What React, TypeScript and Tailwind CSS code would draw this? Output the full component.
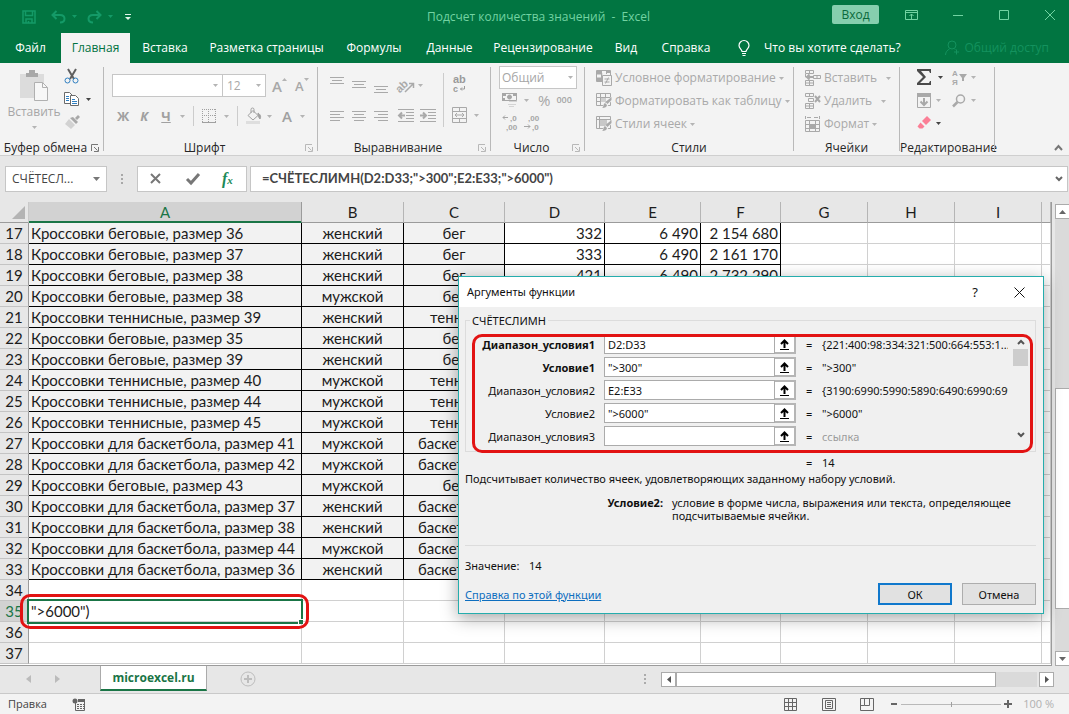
import type { ReactNode } from "react";
import { clsx } from "clsx";

const tabs = [
  { name: "Файл", width: "w-[61px]" },
  { name: "Главная", width: "w-[69px]", active: true },
  { name: "Вставка", width: "w-[70px]" },
  { name: "Разметка страницы", width: "w-[133px]" },
  { name: "Формулы", width: "w-[82px]" },
  { name: "Данные", width: "w-[69px]" },
  { name: "Рецензирование", width: "w-[118px]" },
  { name: "Вид", width: "w-[48px]" },
  { name: "Справка", width: "w-[72px]" },
];

const columns = [
  { name: "A", width: "w-[273px]" },
  { name: "B", width: "w-[102px]" },
  { name: "C", width: "w-[101px]" },
  { name: "D", width: "w-[100px]" },
  { name: "E", width: "w-[96px]" },
  { name: "F", width: "w-[80px]" },
  { name: "G", width: "w-[87px]" },
  { name: "H", width: "w-[87px]" },
  { name: "I", width: "w-[87px]" },
  { name: "", width: "" },
];

const rows: { id: number; cells: string[] }[] = [
  { id: 17, cells: ["Кроссовки беговые, размер 36", "женский", "бег", "332", "6 490", "2 154 680"] },
  { id: 18, cells: ["Кроссовки беговые, размер 37", "женский", "бег", "333", "6 490", "2 161 170"] },
  { id: 19, cells: ["Кроссовки беговые, размер 38", "женский", "бег", "421", "6 490", "2 732 290"] },
  { id: 20, cells: ["Кроссовки беговые, размер 38", "мужской", "бег", "", "", ""] },
  { id: 21, cells: ["Кроссовки теннисные, размер 39", "женский", "теннис", "", "", ""] },
  { id: 22, cells: ["Кроссовки беговые, размер 35", "женский", "бег", "", "", ""] },
  { id: 23, cells: ["Кроссовки беговые, размер 39", "женский", "бег", "", "", ""] },
  { id: 24, cells: ["Кроссовки теннисные, размер 40", "мужской", "теннис", "", "", ""] },
  { id: 25, cells: ["Кроссовки теннисные, размер 44", "мужской", "теннис", "", "", ""] },
  { id: 26, cells: ["Кроссовки теннисные, размер 45", "мужской", "теннис", "", "", ""] },
  { id: 27, cells: ["Кроссовки для баскетбола, размер 41", "мужской", "баскетбол", "", "", ""] },
  { id: 28, cells: ["Кроссовки для баскетбола, размер 42", "мужской", "баскетбол", "", "", ""] },
  { id: 29, cells: ["Кроссовки беговые, размер 43", "мужской", "бег", "", "", ""] },
  { id: 30, cells: ["Кроссовки для баскетбола, размер 37", "женский", "баскетбол", "", "", ""] },
  { id: 31, cells: ["Кроссовки для баскетбола, размер 38", "женский", "баскетбол", "", "", ""] },
  { id: 32, cells: ["Кроссовки для баскетбола, размер 44", "мужской", "баскетбол", "", "", ""] },
  { id: 33, cells: ["Кроссовки для баскетбола, размер 36", "женский", "баскетбол", "", "", ""] },
  { id: 34, cells: [] },
  { id: 35, cells: ['">6000")'] },
  { id: 36, cells: [] },
  { id: 37, cells: [] },
];

const args = [
  { label: "Диапазон_условия1", value: "D2:D33", result: "{221:400:98:334:321:500:664:553:1...", required: true },
  { label: "Условие1", value: '">300"', result: '">300"', required: true },
  { label: "Диапазон_условия2", value: "E2:E33", result: "{3190:6990:5990:5890:6490:6990:6990:5" },
  { label: "Условие2", value: '">6000"', result: '">6000"' },
  { label: "Диапазон_условия3", value: "", result: "ссылка" },
];

type IconProps = { w?: number; h?: number; className?: string; children: ReactNode };

const Icon = ({ w = 16, h = 16, className, children }: IconProps) => (
  <svg
    width={w}
    height={h}
    viewBox={`0 0 ${w} ${h}`}
    fill="none"
    stroke="currentColor"
    className={clsx("shrink-0 overflow-visible font-['Liberation_Sans',sans-serif]", className)}
    aria-hidden="true"
  >
    {children}
  </svg>
);

const Caret = ({ dark }: { dark?: boolean }) => (
  <svg width="5" height="3" viewBox="0 0 5 3" className={clsx("shrink-0", dark ? "text-[#444444]" : "text-[#b4b4b4]")} aria-hidden="true">
    <path d="M0 0h5L2.5 3z" fill="currentColor" />
  </svg>
);

const Tool = ({ label, className, children }: { label: string; className?: string; children: ReactNode }) => (
  <button type="button" aria-label={label} className={clsx("flex shrink-0 items-center", className)}>
    {children}
  </button>
);

const Lines = ({ rows: ys, align }: { rows: number[]; align: "left" | "center" | "right" }) => (
  <Icon w={14} h={16}>
    {ys.map((y, i) => {
      const len = i % 2 ? 10 : 14;
      const x = align === "left" ? 0 : align === "center" ? 2 * (i % 2) : 14 - len;
      return <path key={y} d={`M${x} ${y + 0.5}h${len}`} />;
    })}
  </Icon>
);

const Launcher = ({ dark }: { dark?: boolean }) => (
  <Icon w={8} h={8} className={dark ? "text-[#777777]" : "text-[#b8b8b8]"}>
    <path d="M.5 7V.5H7M3 3l3.500 3.500M7.500 3v4.500H3" />
  </Icon>
);

type GroupProps = { title: string; width: string; launcher?: "dark" | "light"; children: ReactNode };

const Group = ({ title, width, launcher, children }: GroupProps) => (
  <section className={clsx("flex shrink-0", width)}>
    <div className="flex min-w-0 flex-1 flex-col">
      <div className="h-[77px]">{children}</div>
      <div className="flex h-[15px] items-center">
        <h2 className="flex-1 whitespace-nowrap text-center text-xs leading-[15px] text-[#262626]">{title}</h2>
        {launcher && (
          <button type="button" aria-label={title} className="mr-1">
            <Launcher dark={launcher === "dark"} />
          </button>
        )}
      </div>
    </div>
    <div className="my-1 w-px bg-[#b9b9b9]" />
  </section>
);

const TitleBar = () => (
  <header className="flex h-[33px] items-center text-[#72d3a2]">
    <div className="flex flex-1 items-center pl-[22px] text-[#149a67]">
      <Tool label="Сохранить">
        <Icon w={14} h={14}>
          <path d="M1 1h12v12H1zM3.500 1v4.500h7V1M4 13V9h6v4M6.500 13v-2" strokeWidth="1.500" />
        </Icon>
      </Tool>
      <Tool label="Отменить" className="ml-[15px] gap-[6px]">
        <Icon w={15} h={14}>
          <path d="M5.500 1L1.500 5l4 4M1.500 5H9c6 0 6 7.500 0 7.500" strokeWidth="2" />
        </Icon>
        <svg width="5" height="3" viewBox="0 0 5 3" aria-hidden="true"><path d="M0 0h5L2.500 3z" fill="currentColor" /></svg>
      </Tool>
      <Tool label="Вернуть" className="ml-[10px] gap-[6px]">
        <Icon w={15} h={14}>
          <path d="M9.500 1l4 4-4 4M13.500 5H6c-6 0-6 7.500 0 7.500" strokeWidth="2" />
        </Icon>
        <svg width="5" height="3" viewBox="0 0 5 3" aria-hidden="true"><path d="M0 0h5L2.500 3z" fill="currentColor" /></svg>
      </Tool>
      <Tool label="Настройка панели быстрого доступа" className="ml-[12px] text-[#e0f5ea]">
        <Icon w={6} h={6}>
          <path d="M0 .5h6" />
          <path d="M0 3h6L3 6z" fill="currentColor" stroke="none" />
        </Icon>
      </Tool>
    </div>
    <h1 className="whitespace-pre text-xs leading-4">Подсчет количества значений  -  Excel</h1>
    <div className="flex flex-1 items-center justify-end pr-[14px]">
      <button type="button" className="mb-1 h-[19px] w-[47px] rounded-[2px] bg-[#86cfae] text-xs leading-4 text-[#0a6a3c]">
        Вход
      </button>
      <div className="mb-1 flex items-center">
        <Tool label="Параметры ленты" className="ml-[26px]">
          <Icon w={13} h={10}>
            <path d="M.5.5h12v9H.5zM.5 2.500h12M6.500 9V4M4.500 6l2-2 2 2" />
          </Icon>
        </Tool>
        <Tool label="Свернуть" className="ml-[35px]">
          <Icon w={10} h={10}><path d="M0 5.500h10" /></Icon>
        </Tool>
        <Tool label="Развернуть" className="ml-9">
          <Icon w={10} h={10}><path d="M.5.5h9v9h-9z" /></Icon>
        </Tool>
        <Tool label="Закрыть" className="ml-9">
          <Icon w={10} h={10}><path d="M0 0l10 10M10 0L0 10" /></Icon>
        </Tool>
      </div>
    </div>
  </header>
);

const TabBar = () => (
  <nav className="flex h-[30px] items-center text-xs leading-4 text-white">
    {tabs.map((t) => (
      <button
        key={t.name}
        type="button"
        className={clsx(
          "h-full shrink-0 whitespace-nowrap text-center",
          t.width,
          t.active && "bg-[#f3f3f3] text-[#00723f]",
        )}
      >
        {t.name}
      </button>
    ))}
    <button type="button" className="ml-4 flex items-center gap-[14px] whitespace-nowrap">
      <Icon w={12} h={16}>
        <path d="M4 11.500c0-2-3-3-3-6a5 5 0 0 1 10 0c0 3-3 4-3 6zM4 13.500h4M4.500 15.500h3" strokeWidth="1.200" />
      </Icon>
      Что вы хотите сделать?
    </button>
    <button type="button" className="ml-auto mr-5 flex items-center gap-1 whitespace-nowrap text-[#14925e]">
      <Icon w={15} h={16}>
        <circle cx="7" cy="5" r="4" />
        <path d="M.5 15c0-3 2-5 4-6M9.500 9l1 .5M11.500 9.500v5M9 12h5" />
      </Icon>
      Общий доступ
    </button>
  </nav>
);

const ClipboardGroup = () => (
  <Group title="Буфер обмена" width="w-[104px]" launcher="dark">
    <div className="flex">
      <button type="button" className="flex w-16 shrink-0 flex-col items-center pl-1 pt-[7px] text-xs leading-4 text-[#a6a6a6]">
        <Icon w={28} h={32}>
          <path d="M0 4h24v24H0z" fill="#dcdcdc" stroke="none" />
          <path d="M6 3h3V0h6v3h3v4H6z" fill="#a8a8a8" stroke="none" />
          <path d="M14.500 12.500h8l5 5v13h-13z" fill="#f7f7f7" stroke="#b0b0b0" />
          <path d="M22.500 12.500v5h5" stroke="#b0b0b0" />
        </Icon>
        <span className="mt-[2px]">Вставить</span>
        <span className="mt-[6px]"><Caret /></span>
      </button>
      <div className="flex flex-col gap-2 pt-[6px]">
        <Tool label="Вырезать">
          <Icon w={16} h={15}>
            <path d="M4 0l6 10M12 0L6 10" stroke="#5f5f5f" strokeWidth="2" />
            <circle cx="3.500" cy="11.500" r="2.500" stroke="#2f7fc1" />
            <circle cx="11.500" cy="11.500" r="2.500" stroke="#2f7fc1" />
          </Icon>
        </Tool>
        <Tool label="Копировать" className="gap-[6px]">
          <Icon w={16} h={15}>
            <path d="M.5.5h5l3 3v8h-8z" fill="#fff" stroke="#6a6a6a" />
            <path d="M6.500 3.500h5l3 3v7h-8z" fill="#fff" stroke="#6a6a6a" />
            <path d="M2 4.500h3M2 6.500h3M2 8.500h3M8 7.500h3M8 9.500h5M8 11.500h5" stroke="#2f7fc1" />
          </Icon>
          <Caret dark />
        </Tool>
        <Tool label="Формат по образцу">
          <Icon w={16} h={14}>
            <path d="M11 3l3-3 2 2-3 3z" fill="#a8a8a8" stroke="none" />
            <path d="M6 3l3-1 5 5-2 2z" fill="#a8a8a8" stroke="none" />
            <path d="M5 4l6 6-4 4-6-5z" fill="#d2d2d2" stroke="none" />
          </Icon>
        </Tool>
      </div>
    </div>
  </Group>
);

const FontGroup = () => (
  <Group title="Шрифт" width="w-[214px]" launcher="light">
    <div className="flex pl-2 pt-[11px] text-[#a8a8a8]">
      <label className="flex h-[23px] w-[111px] items-center border border-[#c6c6c6] bg-white pr-1">
        <input aria-label="Шрифт" className="min-w-0 flex-1 outline-none" />
        <Caret />
      </label>
      <label className="flex h-[23px] w-[43px] items-center border border-l-0 border-[#c6c6c6] bg-white pr-1">
        <input aria-label="Размер шрифта" defaultValue="12" className="w-0 min-w-0 flex-1 pl-1 text-xs outline-none" />
        <Caret />
      </label>
      <Tool label="Увеличить размер шрифта" className="ml-[6px] h-[23px] text-[15px] font-semibold leading-4">
        А<span className="mb-3 rotate-180"><Caret /></span>
      </Tool>
      <Tool label="Уменьшить размер шрифта" className="ml-2 h-[23px] text-[13px] font-semibold leading-4">
        А<span className="mb-3"><Caret /></span>
      </Tool>
    </div>
    <div className="flex items-center pl-[13px] pt-2 text-[13px] font-bold leading-[22px] text-[#a0a0a0]">
      <button type="button" className="w-3">Ж</button>
      <button type="button" className="ml-[9px] w-3 italic">К</button>
      <button type="button" className="ml-[10px] w-3 underline">Ч</button>
      <span className="ml-[8px]"><Caret /></span>
      <span className="ml-2 h-5 w-px bg-[#cccccc]" />
      <Tool label="Границы" className="ml-2 gap-2">
        <Icon w={14} h={14}>
          <path d="M.5 0v13M6.500 0v13M13.500 0v13M0 .5h14M0 6.500h14" strokeDasharray="1 1" />
          <path d="M0 13.500h14" />
        </Icon>
        <Caret />
      </Tool>
      <span className="ml-2 h-5 w-px bg-[#cccccc]" />
      <Tool label="Цвет заливки" className="ml-2 gap-[5px]">
        <Icon w={16} h={16}>
          <path d="M2 7.500l5-5 5 5-5 4.500zM5 5V1.500a1.500 1.500 0 0 1 3 0V5" />
          <path d="M12 5c3 2 3 4 2 6-1-1-2-3-2-6z" fill="currentColor" />
          <path d="M0 13h14v3H0z" fill="#dedede" stroke="none" />
        </Icon>
        <Caret />
      </Tool>
      <Tool label="Цвет текста" className="ml-[10px] gap-2 text-[15px] font-semibold">
        А<Caret />
      </Tool>
    </div>
  </Group>
);

const AlignmentGroup = () => (
  <Group title="Выравнивание" width="w-[173px]" launcher="light">
    <div className="flex gap-4 pl-3 text-[#a9a9a9]">
      <div>
        <div className="flex h-11 items-center gap-2">
          <Tool label="По верхнему краю"><Lines rows={[0, 3, 6]} align="center" /></Tool>
          <Tool label="По середине"><Lines rows={[4, 7, 10]} align="center" /></Tool>
          <Tool label="По нижнему краю"><Lines rows={[9, 12, 15]} align="center" /></Tool>
          <Tool label="Ориентация" className="ml-[2px] gap-[3px]">
            <Icon w={17} h={16}>
              <text x="-3" y="11" transform="rotate(-45 6 8)" fontSize="11" fontWeight="700" fill="currentColor" stroke="none">ab</text>
              <path d="M7 15l8-8M11 6.500h4.500V11" strokeWidth="1.500" />
            </Icon>
            <Caret />
          </Tool>
        </div>
        <div className="mt-[1px] flex h-4 items-center gap-2">
          <Tool label="По левому краю"><Lines rows={[3, 6, 9, 12]} align="left" /></Tool>
          <Tool label="По центру"><Lines rows={[3, 6, 9, 12]} align="center" /></Tool>
          <Tool label="По правому краю"><Lines rows={[3, 6, 9, 12]} align="right" /></Tool>
          <Tool label="Уменьшить отступ" className="ml-[2px]">
            <Icon w={16}>
              <path d="M0 1.500h16M8 4.500h8M8 7.500h8M8 10.500h8M0 13.500h16" />
              <path d="M7 7.500H1M4 4.500l-3 3 3 3" strokeWidth="2" />
            </Icon>
          </Tool>
          <Tool label="Увеличить отступ" className="-ml-[2px]">
            <Icon w={16}>
              <path d="M0 1.500h16M8 4.500h8M8 7.500h8M8 10.500h8M0 13.500h16" />
              <path d="M0 7.500h6M3 4.500l3 3-3 3" strokeWidth="2" />
            </Icon>
          </Tool>
        </div>
      </div>
      <div className="-ml-[9px] mt-[10px] h-[54px] w-px bg-[#cccccc]" />
      <div className="-ml-2">
        <Tool label="Перенести текст" className="mt-3">
          <Icon w={16} h={18} className="text-[#9a9a9a]">
            <text x="1" y="8" fontSize="11" fontWeight="700" fill="currentColor" stroke="none">ab</text>
            <text x="1" y="17" fontSize="9" fontWeight="700" fill="currentColor" stroke="none">c</text>
            <path d="M12.500 11v3h-4M10 12.500L8.500 14l1.500 1.500" />
          </Icon>
        </Tool>
        <Tool label="Объединить" className="mt-[14px] gap-[6px]">
          <Icon w={16} h={16}>
            <path d="M.5.5h14v15H.5zM.5 4.500h14M.5 11.500h14M7.500.5v4M7.500 11.500v4M3 8h9M5 6L3 8l2 2M10 6l2 2-2 2" />
          </Icon>
          <Caret />
        </Tool>
      </div>
    </div>
  </Group>
);

const NumberGroup = () => (
  <Group title="Число" width="w-[94px]" launcher="light">
    <div className="pl-2 pt-[3px] text-[#a6a6a6]">
      <div className="grid w-[78px] items-center">
        <select
          aria-label="Числовой формат"
          className="col-start-1 row-start-1 h-[23px] appearance-none border border-[#c6c6c6] bg-white pl-[2px] text-xs leading-4 outline-none"
        >
          <option>Общий</option>
        </select>
        <span className="col-start-1 row-start-1 mr-1 justify-self-end"><Caret /></span>
      </div>
      <div className="mt-[2px] flex h-[18px] items-center pl-[3px]">
        <Tool label="Финансовый формат" className="gap-[6px]">
          <Icon w={16} h={16}>
            <path d="M.5 1.500h14v7H.5z" />
            <path d="M0 1h4v3H0zM11 1h4v3h-4zM0 6h3v3H0z" fill="currentColor" stroke="none" />
            <circle cx="7.500" cy="5" r="2" fill="currentColor" />
            <path d="M7 9.500h8M6 12.500h8M7 14.500h5" stroke="#d4d4d4" />
          </Icon>
          <Caret />
        </Tool>
        <button type="button" className="ml-[9px] text-[15px] leading-4">%</button>
        <button type="button" className="ml-[6px] text-[9px] font-semibold leading-4">000</button>
      </div>
      <div className="mt-1 flex h-[18px] items-center gap-[6px] pl-[3px]">
        <Tool label="Увеличить разрядность">
          <Icon w={16} h={18}>
            <text x="8" y="8" fontSize="8" fontWeight="700" fill="currentColor" stroke="none">,0</text>
            <text x="4" y="17" fontSize="8" fontWeight="700" fill="currentColor" stroke="none">,00</text>
            <path d="M6 4.500H1M3 2.500l-2 2 2 2" />
          </Icon>
        </Tool>
        <Tool label="Уменьшить разрядность">
          <Icon w={16} h={18}>
            <text x="4" y="8" fontSize="8" fontWeight="700" fill="currentColor" stroke="none">,00</text>
            <text x="8" y="17" fontSize="8" fontWeight="700" fill="currentColor" stroke="none">,0</text>
            <path d="M0 13.500h6M4 11.500l2 2-2 2" />
          </Icon>
        </Tool>
      </div>
    </div>
  </Group>
);

const Brush = () => (
  <>
    <path d="M16 3l-5 5-2 2-3 4h5l2-3 3-4z" fill="#f3f3f3" stroke="none" />
    <path d="M15.500 4v3l-4 4-2-2zM9 10l2 2c0 2-2 3-5 3 2-1 1-4 3-5z" fill="currentColor" stroke="none" />
  </>
);

const StylesGroup = () => (
  <Group title="Стили" width="w-[209px]">
    <div className="flex flex-col gap-[7px] pl-[11px] pt-[7px] text-xs leading-4 text-[#a9a9a9]">
      <button type="button" className="flex items-center gap-[3px] whitespace-nowrap">
        <Icon>
          <path d="M.5.5h14v11H.5zM.5 4h6M.5 8h6M5.500 0v12M10.500 0v4" />
          <path d="M0 1h6v3H0zM0 8h5v3H0zM10 1h4v2h-4z" fill="currentColor" stroke="none" />
          <path d="M6.500 5.500h9v10h-9z" fill="#f3f3f3" />
          <path d="M8.500 9h5M8.500 12h5M12.500 7.500l-3 6" />
        </Icon>
        Условное форматирование <Caret />
      </button>
      <button type="button" className="flex items-center gap-[3px] whitespace-nowrap">
        <Icon>
          <path d="M.5.5h14v12H.5zM0 4.500h15M0 8.500h15M4.500 0v13M9.500 0v13" />
          <path d="M5 5h5v4H5z" fill="#d0d0d0" stroke="none" />
          <Brush />
        </Icon>
        Форматировать как таблицу <Caret />
      </button>
      <button type="button" className="flex items-center gap-[3px] whitespace-nowrap">
        <Icon>
          <path d="M.5.5h14v12H.5zM0 3.500h15M3.500 0v13" />
          <path d="M4 4h7v6H4z" fill="#c8c8c8" stroke="none" />
          <Brush />
        </Icon>
        Стили ячеек <Caret />
      </button>
    </div>
  </Group>
);

const CellsGroup = () => (
  <Group title="Ячейки" width="w-[106px]">
    <div className="flex flex-col gap-[7px] pl-[11px] pt-[7px] text-xs leading-4 text-[#a9a9a9]">
      <button type="button" className="flex items-center gap-[3px]">
        <Icon>
          <path d="M.5.5h8v3h-8zM4.500.5v3M.5 10.500h8v5h-8zM4.500 10.500v5M.5 13h8M.5 4v3h3M8.500 5.500h7v3h-7zM12 5.500v3" />
          <path d="M8 7H2M4.500 4.500L2 7l2.500 2.500" strokeWidth="2" />
        </Icon>
        Вставить <span className="ml-[6px]"><Caret /></span>
      </button>
      <button type="button" className="flex items-center gap-[3px]">
        <Icon>
          <path d="M.5.5h8v3h-8zM4.500.5v3M.5 10.500h8v5h-8zM4.500 10.500v5M.5 13h8M3.500 5.500h5v3h-5z" />
          <path d="M10 3l5 6M15 3l-5 6" strokeWidth="2" />
        </Icon>
        Удалить <span className="ml-[6px]"><Caret /></span>
      </button>
      <button type="button" className="flex items-center gap-[3px]">
        <Icon>
          <path d="M.5 4.500h14v11H.5zM0 8.500h15M0 12.500h15M4.500 4v12M10.500 4v12M.5 0v3M14.500 0v3M2 1.500h4M9 1.500h4" />
          <path d="M4 8h7v5H4z" fill="currentColor" stroke="none" />
        </Icon>
        Формат <Caret />
      </button>
    </div>
  </Group>
);

const EditingGroup = () => (
  <Group title="Редактирование" width="w-[95px]">
    <div className="grid grid-cols-[35px_1fr] gap-y-2 pl-4 pt-[6px] text-[#a9a9a9]">
      <Tool label="Автосумма" className="gap-[6px]">
        <Icon w={16} h={16} className="text-[#4a4a4a]">
          <path d="M1 0h14v4h-1l-1-2H5l5 6-6 6h9l1-2h1v4H1v-2l6-6-6-6z" fill="currentColor" stroke="none" />
        </Icon>
        <Caret dark />
      </Tool>
      <Tool label="Сортировка и фильтр" className="gap-[3px]">
        <Icon w={17} h={16}>
          <text x="1" y="7" fontSize="8" fontWeight="700" fill="currentColor" stroke="none">А</text>
          <text x="1" y="16" fontSize="8" fontWeight="700" fill="currentColor" stroke="none">Я</text>
          <path d="M8 5h8l-3 4v3h-2V9z" fill="currentColor" stroke="none" />
        </Icon>
        <Caret />
      </Tool>
      <Tool label="Заполнить" className="gap-[4px] pl-[1px]">
        <Icon w={15} h={15}>
          <path d="M.5.5h13v14H.5z" />
          <path d="M0 0h14v4H0z" fill="currentColor" stroke="none" />
          <path d="M7 5v7M3.500 8.500L7 12l3.500-3.500" strokeWidth="2" />
        </Icon>
        <Caret />
      </Tool>
      <Tool label="Найти и выделить" className="gap-[4px]">
        <Icon w={16} h={14}>
          <circle cx="9.500" cy="5" r="4" strokeWidth="1.500" />
          <path d="M6.500 8L2 12.500" strokeWidth="2.500" />
        </Icon>
        <Caret />
      </Tool>
      <Tool label="Очистить" className="gap-[5px] pl-[1px]">
        <Icon w={14} h={14}>
          <path d="M5 5l5-5 4 4-5 5z" fill="#fb7f96" stroke="none" />
          <path d="M3.500 6.500l4 4-2 2h-3l-2-2z" fill="#fb7f96" stroke="none" />
        </Icon>
        <Caret dark />
      </Tool>
    </div>
  </Group>
);

const FormulaBar = () => (
  <div className="flex h-[46px] items-start bg-[#e7e7e7] pl-[5px] pr-[1px] pt-[10px] text-[#444444]">
    <label className="flex h-[26px] w-[102px] shrink-0 items-center border border-[#c6c6c6] bg-white pr-[6px]">
      <input aria-label="Имя" defaultValue="СЧЁТЕСЛ..." className="w-0 min-w-0 flex-1 pl-[6px] text-xs outline-none" />
      <svg width="7" height="4" viewBox="0 0 7 4" aria-hidden="true"><path d="M0 0h7L3.500 4z" fill="#777" /></svg>
    </label>
    <div className="flex h-[26px] w-[30px] shrink-0 items-center justify-center">
      <Icon w={2} h={12}><path d="M1 1v10" stroke="#a8a8a8" strokeWidth="2" strokeDasharray="2 2" /></Icon>
    </div>
    <div className="flex h-[26px] w-[110px] shrink-0 items-center border border-[#c6c6c6] bg-white pl-3">
      <Tool label="Отмена ввода"><Icon w={12} h={12}><path d="M1 1l9 9M10 1l-9 9" stroke="#777" strokeWidth="2" /></Icon></Tool>
      <Tool label="Ввод" className="ml-6"><Icon w={14} h={12}><path d="M1 6l4 4 8-9" stroke="#777" strokeWidth="3" /></Icon></Tool>
      <button type="button" aria-label="Вставить функцию" className="ml-[22px] font-['Liberation_Serif',serif] text-base font-bold italic leading-5 text-[#1c8a58]">
        f<span className="text-[11px]">x</span>
      </button>
    </div>
    <label className="ml-[3px] flex h-[26px] min-w-0 flex-1 items-center border border-[#c6c6c6] bg-white pr-1">
      <input
        aria-label="Строка формул"
        defaultValue={'=СЧЁТЕСЛИМН(D2:D33;">300";E2:E33;">6000")'}
        className="min-w-0 flex-1 pl-[11px] font-['Lato','Noto_Sans',sans-serif] text-[13px] font-bold outline-none"
      />
      <Icon w={8} h={6}><path d="M1 1l3 3 3-3" stroke="#666" strokeWidth="2" /></Icon>
    </label>
  </div>
);

const Sheet = () => (
  <div className="flex bg-[#e7e7e7]">
    <div className="min-w-0 flex-1 overflow-hidden border-b border-r border-[#9b9b9b] bg-white pb-px">
      <table className="w-full table-fixed border-separate border-spacing-0 font-['Lato','Noto_Sans',sans-serif] text-[15px] leading-5 text-[#1c1c1c]">
        <thead>
          <tr className="h-[21px] bg-[#e7e7e7]">
            <th className="w-[29px] border-b border-r border-b-[#9b9b9b] border-r-[#c9c9c9] p-0">
              <svg width="13" height="13" viewBox="0 0 13 13" className="ml-3" aria-hidden="true"><path d="M13 0v13H0z" fill="#b4b4b4" /></svg>
            </th>
            {columns.map((c) => (
              <th
                key={c.name}
                className={clsx(
                  "h-[21px] border-b border-r p-0 font-normal",
                  c.width,
                  c.name === "A"
                    ? "border-b-[#1a7546] border-r-[#9b9b9b] bg-[#d2d2d2] text-[#1a7546] shadow-[inset_0_-1px_0_#1a7546]"
                    : "border-b-[#9b9b9b] border-r-[#b5b5b5]",
                )}
              >
                {c.name}
              </th>
            ))}
          </tr>
        </thead>
        <tbody>
          {rows.map((r) => (
            <tr key={r.id}>
              <th
                className={clsx(
                  "h-[21px] border-b border-r border-b-[#c4c4c4] border-r-[#9b9b9b] p-0 font-normal",
                  r.id === 35 ? "bg-[#d2d2d2] text-[#1a7546]" : "bg-[#e7e7e7]",
                )}
              >
                {r.id}
              </th>
              {columns.map((c, i) => {
                const inTable = r.id < 34 && i < 6;
                return (
                  <td
                    key={c.name}
                    className={clsx(
                      "h-[21px] overflow-hidden whitespace-nowrap border-b border-r p-0",
                      inTable ? "border-black" : "border-[#d0d0d0]",
                      inTable && i < 3 && "bg-[#f2f2f2]",
                      i === 0 && "pl-[2px]",
                      (i === 1 || i === 2) && "text-center",
                      i > 2 && "pr-[2px] text-right",
                    )}
                  >
                    {r.cells[i]}
                  </td>
                );
              })}
            </tr>
          ))}
        </tbody>
      </table>
    </div>
    <div className="ml-[3px] mt-[2px] flex w-[14px] flex-col">
      <button type="button" aria-label="Прокрутить вверх" className="flex h-[15px] items-center justify-center border border-r-0 border-[#ababab] bg-white">
        <svg width="7" height="4" viewBox="0 0 7 4" aria-hidden="true"><path d="M0 4h7L3.500 0z" fill="#666" /></svg>
      </button>
      <div className="flex flex-1 flex-col bg-[#dadada] pt-[169px]">
        <div className="h-[221px] border border-r-0 border-[#ababab] bg-white" />
      </div>
      <button type="button" aria-label="Прокрутить вниз" className="flex h-[15px] items-center justify-center border border-r-0 border-[#ababab] bg-white">
        <svg width="7" height="4" viewBox="0 0 7 4" aria-hidden="true"><path d="M0 0h7L3.500 4z" fill="#666" /></svg>
      </button>
    </div>
  </div>
);

const SheetTabs = () => (
  <div className="flex h-[27px] items-start bg-[#e7e7e7]">
    <div className="flex h-[26px] w-[100px] shrink-0 items-center gap-6 pl-[26px]">
      <Tool label="Предыдущий лист"><Icon w={5} h={8}><path d="M5 0v8L0 4z" fill="#bbb" stroke="none" /></Icon></Tool>
      <Tool label="Следующий лист"><Icon w={5} h={8}><path d="M0 0v8l5-4z" fill="#bbb" stroke="none" /></Icon></Tool>
    </div>
    <button type="button" className="h-[25px] w-[107px] shrink-0 border-x border-b-2 border-x-[#ababab] border-b-[#1a7546] bg-white text-xs font-bold leading-4 text-[#1a7546]">
      microexcel.ru
    </button>
    <Tool label="Новый лист" className="ml-[33px] h-[26px] text-[#bdbdbd]">
      <Icon>
        <circle cx="8" cy="8" r="7" />
        <path d="M8 4v8M4 8h8" strokeWidth="2" />
      </Icon>
    </Tool>
    <div className="ml-auto flex h-[26px] items-center">
      <Icon w={2} h={10}><path d="M1 0v10" stroke="#ababab" strokeWidth="2" strokeDasharray="2 2" /></Icon>
    </div>
    <div className="ml-[15px] mr-[15px] mt-[6px] flex h-[15px] w-[393px] bg-[#dadada]">
      <button type="button" aria-label="Прокрутить влево" className="flex w-[15px] items-center justify-center border border-[#ababab] bg-white">
        <svg width="4" height="7" viewBox="0 0 4 7" aria-hidden="true"><path d="M4 0v7L0 3.500z" fill="#555" /></svg>
      </button>
      <div className="w-[320px] border border-[#ababab] bg-white" />
      <span className="flex-1" />
      <span className="w-[2px] bg-[#e7e7e7]" />
      <button type="button" aria-label="Прокрутить вправо" className="flex w-[15px] items-center justify-center border border-[#ababab] bg-white">
        <svg width="4" height="7" viewBox="0 0 4 7" aria-hidden="true"><path d="M0 0v7l4-3.500z" fill="#555" /></svg>
      </button>
    </div>
  </div>
);

const StatusBar = () => (
  <footer className="flex h-[21px] items-center border-t border-[#c9c9c9] bg-[#f3f3f3] pl-2 pr-[15px] text-[#666666]">
    <span className="w-16 text-[11px] leading-4 text-[#444444]">Правка</span>
    <Tool label="Запись макроса">
      <Icon w={13} h={13}>
        <path d="M3.500 3.500V12.500h9V3.500" />
        <path d="M6 1h7v3H6z" fill="currentColor" stroke="none" />
        <circle cx="3" cy="3" r="2.500" fill="currentColor" stroke="none" />
        <path d="M5 6.500h7M5 8.500h7M5 10.500h7" strokeDasharray="2 1" />
      </Icon>
    </Tool>
    <div className="ml-auto flex items-center">
      <Tool label="Обычный"><Icon w={13} h={13}><path d="M.5.5h12v12H.5zM4.500 0v13M8.500 0v13M0 4.500h13M0 8.500h13" /></Icon></Tool>
      <Tool label="Разметка страницы" className="ml-[25px]"><Icon w={14} h={13}><path d="M.5.5h13v12H.5zM3.500 2.500h7v8h-7zM5 4.500h4M5 6.500h4M5 8.500h4" /></Icon></Tool>
      <Tool label="Страничный режим" className="ml-6"><Icon w={14} h={13}><path d="M.5.5h13v12H.5zM4.500 1v6.500M4.500 7.500h5V0M.5 7.500h4" /></Icon></Tool>
      <Tool label="Уменьшить" className="ml-[17px]"><Icon w={6} h={8}><path d="M0 4h6" strokeWidth="2" /></Icon></Tool>
      <input
        type="range"
        aria-label="Масштаб"
        min={0}
        max={200}
        defaultValue={100}
        className="ml-1 h-px w-[100px] appearance-none bg-[#b9b9b9] [&::-webkit-slider-thumb]:h-[5px] [&::-webkit-slider-thumb]:w-px [&::-webkit-slider-thumb]:appearance-none [&::-webkit-slider-thumb]:bg-[#a0a0a0]"
      />
      <Tool label="Увеличить" className="ml-[3px]"><Icon w={8} h={8}><path d="M0 4h8M4 0v8" strokeWidth="2" /></Icon></Tool>
      <span className="ml-[11px] whitespace-nowrap text-[11px] leading-4 text-[#b0b0b0]">100 %</span>
    </div>
  </footer>
);

const ArgumentsDialog = () => (
  <div
    role="dialog"
    aria-labelledby="dialog-title"
    className="absolute left-[458px] top-[276px] w-[586px] border border-[#25adad] bg-[#f0f0f0] font-['Noto_Sans',sans-serif] text-[11px] leading-[13px] text-[#111111] shadow-[0_4px_16px_rgba(0,0,0,0.35)]"
  >
    <div className="flex h-[30px] items-center bg-white pl-2 pr-[18px]">
      <h2 id="dialog-title" className="flex-1 text-[11px] leading-4">Аргументы функции</h2>
      <button type="button" className="text-[13px] leading-4">?</button>
      <Tool label="Закрыть окно" className="ml-9"><Icon w={11} h={11}><path d="M.5.500l10 10M10.500.500l-10 10" /></Icon></Tool>
    </div>
    <div className="pb-2 pl-[6px] pr-[7px] pt-[7px]">
      <fieldset className="relative h-[138px] border border-[#dcdcdc] pl-[10px] pr-[7px]">
        <legend className="-ml-[6px] px-[2px]">СЧЁТЕСЛИМН</legend>
        <div className="flex h-[117px] pt-[7px]">
          <div className="flex min-w-0 flex-1 flex-col gap-[3px]">
            {args.map((a, i) => (
              <div key={a.label} className="flex h-5 items-center">
                <label htmlFor={`arg-${i}`} className={clsx("w-[119px] shrink-0 whitespace-nowrap text-right", a.required && "font-bold")}>
                  {a.label}
                </label>
                <input id={`arg-${i}`} defaultValue={a.value} className="ml-[9px] h-5 w-[171px] shrink-0 border border-[#ababab] bg-white pl-[3px] outline-none" />
                <button
                  type="button"
                  aria-label={`Выбрать: ${a.label}`}
                  className="flex h-5 w-[21px] shrink-0 items-center justify-center border-2 border-l-0 border-[#b5b5b5] bg-white text-black"
                >
                  <Icon w={9} h={11}>
                    <path d="M4.500 9V2M1 5l3.500-3.500L8 5" strokeWidth="2" />
                    <path d="M0 10.500h9" />
                  </Icon>
                </button>
                <span className="ml-[10px] w-4 shrink-0">=</span>
                <output className={clsx("w-[186px] shrink-0 overflow-hidden whitespace-nowrap", i === 4 && "text-[#9b9b9b]")}>
                  {a.result}
                </output>
              </div>
            ))}
          </div>
          <div className="mt-[1px] flex h-[107px] w-[15px] shrink-0 flex-col items-center text-[#555555]">
            <button type="button" aria-label="Вверх" className="flex h-[14px] items-center"><Icon w={8} h={6}><path d="M1 5l3-3 3 3" strokeWidth="2" /></Icon></button>
            <div className="h-[17px] w-[15px] bg-[#cdcdcd]" />
            <button type="button" aria-label="Вниз" className="mt-auto flex h-[14px] items-center"><Icon w={8} h={6}><path d="M1 1l3 3 3-3" strokeWidth="2" /></Icon></button>
          </div>
        </div>
        <div className="pointer-events-none absolute left-[6px] top-[7px] h-[119px] w-[561px] rounded-[10px] border-[3px] border-[#e21313]" />
      </fieldset>
      <div className="mt-1 flex h-[13px] pl-[341px]">
        <span className="w-4">=</span>14
      </div>
      <p className="mt-[3px]">Подсчитывает количество ячеек, удовлетворяющих заданному набору условий.</p>
      <div className="mt-[11px] flex">
        <p className="w-[198px] shrink-0 text-right font-bold">Условие2:</p>
        <p className="ml-[9px] w-[350px]">условие в форме числа, выражения или текста, определяющее подсчитываемые ячейки.</p>
      </div>
      <hr className="mt-[23px] border-[#dcdcdc]" />
      <p className="mt-[13px] flex">
        <span className="w-16">Значение:</span>14
      </p>
      <div className="mt-[11px] flex items-center">
        <a href="#help" className="text-[#0d6ebf] underline">Справка по этой функции</a>
        <button type="button" className="ml-auto h-[22px] w-[74px] border-2 border-[#1078cc] bg-[#e1e1e1]">ОК</button>
        <button type="button" className="ml-[10px] h-[22px] w-[74px] border border-[#adadad] bg-[#e1e1e1]">Отмена</button>
      </div>
    </div>
  </div>
);

export default function App() {
  return (
    <div className="relative min-h-screen overflow-hidden bg-[#e7e7e7] font-['Open_Sans','Noto_Sans',sans-serif]">
      <div className="bg-[#017541]">
        <TitleBar />
        <TabBar />
      </div>
      <div className="flex h-[93px] border-b border-[#cfcfcf] bg-[#f3f3f3]">
        <ClipboardGroup />
        <FontGroup />
        <AlignmentGroup />
        <NumberGroup />
        <StylesGroup />
        <CellsGroup />
        <EditingGroup />
        <Tool label="Свернуть ленту" className="mb-1 ml-auto mr-[6px] self-end">
          <Icon w={9} h={7}><path d="M1 6l3.500-4L8 6" stroke="#777" strokeWidth="2" /></Icon>
        </Tool>
      </div>
      <FormulaBar />
      <main className="relative">
        <Sheet />
        <div className="pointer-events-none absolute left-[27px] top-[397px] h-[25px] w-[276px] border-2 border-[#1a7546]">
          <span className="absolute -bottom-[2px] -right-[2px] size-[5px] border-l border-t border-white bg-[#1a7546]" />
        </div>
        <div className="pointer-events-none absolute left-[20px] top-[392px] h-[35px] w-[289px] rounded-[10px] border-[3px] border-[#e21313]" />
      </main>
      <SheetTabs />
      <StatusBar />
      <ArgumentsDialog />
    </div>
  );
}
